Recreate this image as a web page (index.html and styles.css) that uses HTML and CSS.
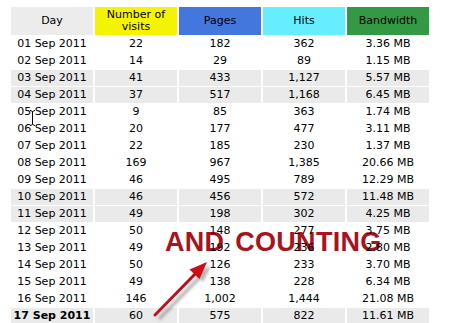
FILE: index.html
```html
<!DOCTYPE html>
<html>
<head>
<meta charset="utf-8">
<link rel="stylesheet" href="styles.css">
</head>
<body>
<div class="stage">
  <div class="overlay-text">AND COUNTING</div>
  <table class="stats">
    <thead>
      <tr>
        <th class="h-day">Day</th>
        <th class="h-visits">Number of visits</th>
        <th class="h-pages">Pages</th>
        <th class="h-hits">Hits</th>
        <th class="h-bw">Bandwidth</th>
      </tr>
    </thead>
    <tbody>
      <tr><td>01 Sep 2011</td><td>22</td><td>182</td><td>362</td><td>3.36 MB</td></tr>
      <tr><td>02 Sep 2011</td><td>14</td><td>29</td><td>89</td><td>1.15 MB</td></tr>
      <tr class="we"><td>03 Sep 2011</td><td>41</td><td>433</td><td>1,127</td><td>5.57 MB</td></tr>
      <tr class="we"><td>04 Sep 2011</td><td>37</td><td>517</td><td>1,168</td><td>6.45 MB</td></tr>
      <tr><td>05 Sep 2011</td><td>9</td><td>85</td><td>363</td><td>1.74 MB</td></tr>
      <tr><td>06 Sep 2011</td><td>20</td><td>177</td><td>477</td><td>3.11 MB</td></tr>
      <tr><td>07 Sep 2011</td><td>22</td><td>185</td><td>230</td><td>1.37 MB</td></tr>
      <tr><td>08 Sep 2011</td><td>169</td><td>967</td><td>1,385</td><td>20.66 MB</td></tr>
      <tr><td>09 Sep 2011</td><td>46</td><td>495</td><td>789</td><td>12.29 MB</td></tr>
      <tr class="we"><td>10 Sep 2011</td><td>46</td><td>456</td><td>572</td><td>11.48 MB</td></tr>
      <tr class="we"><td>11 Sep 2011</td><td>49</td><td>198</td><td>302</td><td>4.25 MB</td></tr>
      <tr><td>12 Sep 2011</td><td>50</td><td>148</td><td>277</td><td>3.75 MB</td></tr>
      <tr><td>13 Sep 2011</td><td>49</td><td>192</td><td>236</td><td>2.80 MB</td></tr>
      <tr><td>14 Sep 2011</td><td>50</td><td>126</td><td>233</td><td>3.70 MB</td></tr>
      <tr><td>15 Sep 2011</td><td>49</td><td>138</td><td>228</td><td>6.34 MB</td></tr>
      <tr><td>16 Sep 2011</td><td>146</td><td>1,002</td><td>1,444</td><td>21.08 MB</td></tr>
      <tr class="we today"><td>17 Sep 2011</td><td>60</td><td>575</td><td>822</td><td>11.61 MB</td></tr>
    </tbody>
  </table>
  <svg class="arrow" width="90" height="80" viewBox="140 250 90 80">
    <defs>
      <filter id="blur" x="-20%" y="-20%" width="140%" height="140%">
        <feGaussianBlur stdDeviation="1.6"/>
      </filter>
      <linearGradient id="red" x1="0" y1="1" x2="1" y2="0">
        <stop offset="0" stop-color="#c8101a"/>
        <stop offset="1" stop-color="#b80c14"/>
      </linearGradient>
    </defs>
    <g filter="url(#blur)" opacity="0.55" transform="translate(4,4)">
      <line x1="155" y1="315" x2="197" y2="272" stroke="#777" stroke-width="3.5"/>
      <polygon points="207,262 190,269 199,278" fill="#777"/>
    </g>
    <line x1="155" y1="315" x2="197" y2="272" stroke="url(#red)" stroke-width="3" stroke-linecap="round"/>
    <polygon points="207,262 189.5,269.5 199.5,279" fill="#cc0e16"/>
  </svg>
  <svg class="ibeam" width="8" height="18" viewBox="0 0 8 18">
    <path d="M1 1.5 Q3 1.5 3.5 3 Q4 1.5 6 1.5 M3.5 3 V15 M1 16.5 Q3 16.5 3.5 15 Q4 16.5 6 16.5" fill="none" stroke="#000" stroke-width="1"/>
  </svg>
</div>
</body>
</html>
```
FILE: styles.css
```css
html, body {
  margin: 0;
  padding: 0;
  background: #fff;
}

.stage {
  position: relative;
  width: 461px;
  height: 323px;
  overflow: hidden;
  padding: 6px 0 0 9px;
  box-sizing: border-box;
}

.stats {
  position: relative;
  z-index: 1;
  border-collapse: separate;
  border-spacing: 2px 1px;
  font-family: "DejaVu Sans", Verdana, sans-serif;
  font-size: 11px;
  color: #000;
  table-layout: fixed;
}

.stats th {
  width: 82px;
  height: 28px;
  padding: 0;
  font-weight: normal;
  line-height: 12px;
  text-align: center;
  vertical-align: middle;
}

.h-day { background: #ececec; }
.h-visits { background: #f4f400; }
.h-pages { background: #4477dd; }
.h-hits { background: #66eeff; }
.h-bw { background: #339944; }

.stats td {
  height: 16px;
  padding: 0;
  text-align: center;
  vertical-align: middle;
  line-height: 16px;
  white-space: nowrap;
}

.stats tr.we td {
  background: #eaeaea;
}

.stats tr.today td:first-child {
  font-weight: bold;
}

.overlay-text {
  position: absolute;
  left: 165px;
  top: 229px;
  z-index: 0;
  font-family: "Liberation Sans", Arial, sans-serif;
  font-weight: bold;
  font-size: 27px;
  line-height: 27px;
  letter-spacing: 0.3px;
  word-spacing: 3px;
  color: #a8141d;
  white-space: nowrap;
}

.arrow {
  position: absolute;
  left: 140px;
  top: 250px;
  z-index: 2;
}

.ibeam {
  position: absolute;
  left: 29px;
  top: 109px;
  z-index: 2;
}
```
